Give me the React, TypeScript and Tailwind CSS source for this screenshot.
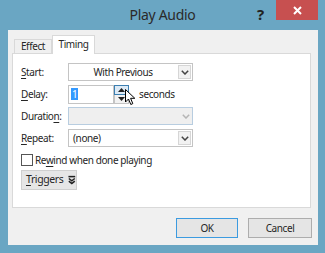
import React from 'react'

const font = { fontFamily: '"Segoe UI", "Noto Sans", "Open Sans", sans-serif' }

const Chevron = ({ light }: { light?: boolean }) => (
  <svg width="8" height="5" viewBox="0 0 8 5">
    <path d="M0.8 0.8 L4 4 L7.2 0.8" fill="none" stroke={light ? '#b5b5b5' : '#444'} strokeWidth="1.5" />
  </svg>
)

const Combo = ({ text, center, disabled }: { text?: string; center?: boolean; disabled?: boolean }) => (
  <div
    className={`flex h-[18px] w-[125px] items-stretch border ${
      disabled ? 'border-[#b8cde0] bg-[#efefef]' : 'border-[#c4c4c4] bg-white'
    }`}
  >
    <div className={`flex flex-1 items-center px-1 ${center ? 'justify-center' : ''}`}>{text}</div>
    <div
      className={`flex w-[13px] items-center justify-center ${
        disabled ? '' : 'border border-[#d6d6d6] bg-[#f2f2f2] m-px'
      }`}
    >
      <Chevron light={disabled} />
    </div>
  </div>
)

const Label = ({ pre, u, post }: { pre?: string; u: string; post?: string }) => (
  <span className="w-[47px] shrink-0">
    {pre}
    <span className="underline underline-offset-2">{u}</span>
    {post}
  </span>
)

export default function App() {
  return (
    <div
      className="flex h-[253px] w-[325px] flex-col bg-[#6aa6c3] text-[10px] tracking-[-0.4px] text-[#262626]"
      style={font}
    >
      {/* title bar */}
      <div className="relative flex h-[30px] shrink-0 items-center justify-center">
        <span className="pb-[1px] text-[14px] tracking-[-0.3px] text-[#2a2a2a]">Play Audio</span>
        <span className="absolute left-[257px] top-[3px] text-[15px] font-bold text-[#222]">?</span>
        <div className="absolute left-[276px] top-0 flex h-[20px] w-[42px] items-center justify-center bg-[#c75050]">
          <svg width="9" height="9" viewBox="0 0 9 9">
            <path d="M1 1 L8 8 M8 1 L1 8" stroke="#fff" strokeWidth="2" />
          </svg>
        </div>
      </div>

      {/* client area */}
      <div className="ml-[8px] mr-[7px] flex h-[215px] flex-col bg-[#f0f0f0]">
        {/* tabs */}
        <div className="ml-[6px] mt-[5px] flex h-[18px] items-end">
          <div className="flex h-[14px] w-[38px] items-center justify-center border border-b-0 border-[#d9d9d9] bg-[#f0f0f0]">
            Effect
          </div>
          <div className="relative z-10 -mb-px flex h-[19px] w-[43px] items-center justify-center border border-b-0 border-[#d9d9d9] bg-white pb-[2px]">
            Timing
          </div>
        </div>

        {/* panel */}
        <div className="ml-[4px] mr-[7px] flex h-[155px] flex-col border border-[#d9d9d9] bg-white pl-[8px] pt-[7px]">
          <div className="flex h-[22px] items-center">
            <Label u="S" post="tart:" />
            <Combo text="With Previous" center />
          </div>
          <div className="flex h-[22px] items-center">
            <Label u="D" post="elay:" />
            <div className="relative flex items-center">
              <div className="flex h-[19px] w-[46px] items-center border border-[#c4c4c4] bg-white pl-[2px]">
                <span className="bg-[#3399ff] px-[1px] leading-[12px] text-white">1</span>
              </div>
              <div className="flex h-[19px] w-[15px] flex-col">
                <div className="flex flex-1 items-center justify-center border border-[#3c7fb1] bg-[#dceaf6]">
                  <svg width="7" height="4" viewBox="0 0 7 4"><path d="M3.5 0 L7 4 L0 4 Z" fill="#222" /></svg>
                </div>
                <div className="flex flex-1 items-center justify-center border border-t-0 border-[#c4c4c4] bg-[#f2f2f2]">
                  <svg width="7" height="4" viewBox="0 0 7 4"><path d="M0 0 L7 0 L3.5 4 Z" fill="#222" /></svg>
                </div>
              </div>
              {/* mouse pointer */}
              <svg className="absolute left-[57px] top-[4px]" width="11" height="17" viewBox="0 0 11 17">
                <path d="M0.5 0.5 L0.5 13 L3.5 10 L5.8 15.5 L7.8 14.6 L5.6 9.3 L9.8 9.3 Z" fill="#fff" stroke="#000" strokeWidth="1" />
              </svg>
              <span className="ml-[10px]">seconds</span>
            </div>
          </div>
          <div className="flex h-[22px] items-center">
            <Label pre="Duratio" u="n" post=":" />
            <Combo disabled />
          </div>
          <div className="flex h-[22px] items-center">
            <Label u="R" post="epeat:" />
            <Combo text="(none)" />
          </div>
          <div className="mt-[5px] flex h-[12px] items-center gap-[2px]">
            <div className="h-[12px] w-[12px] border border-[#555] bg-white" />
            <span>
              Re<span className="underline underline-offset-2">w</span>ind when done playing
            </span>
          </div>
          <div className="mt-[4px] flex h-[20px] w-[56px] items-center gap-[5px] border border-[#cfcfcf] bg-[#e6e6e6] pl-[4px]">
            <span className="text-[10.5px]">
              <span className="underline underline-offset-2">T</span>riggers
            </span>
            <svg width="9" height="10" viewBox="0 0 9 10">
              <path d="M0.5 1 L8.5 1" stroke="#222" strokeWidth="1.8" />
              <path d="M1 3.2 L4.5 6 L8 3.2 M1 6.4 L4.5 9.2 L8 6.4" fill="none" stroke="#222" strokeWidth="1.8" />
            </svg>
          </div>
        </div>

        {/* buttons */}
        <div className="mr-[6px] mt-[10px] flex justify-end gap-[10px]">
          <button className="flex h-[20px] w-[62px] items-center justify-center border border-[#3c9be0] bg-[#e5e5e5]">
            OK
          </button>
          <button className="flex h-[20px] w-[64px] items-center justify-center border border-[#adadad] bg-[#e5e5e5]">
            Cancel
          </button>
        </div>
      </div>
    </div>
  )
}
